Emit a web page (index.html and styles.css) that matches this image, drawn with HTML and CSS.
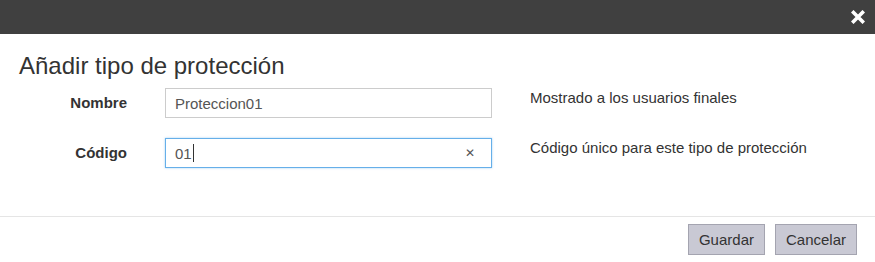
FILE: index.html
```html
<!DOCTYPE html>
<html lang="es">
<head>
  <meta charset="UTF-8">
  <title>Añadir tipo de protección</title>
  <link rel="stylesheet" href="styles.css">
</head>
<body>
  <div class="modal">
    <div class="modal-header">
      <button class="modal-close" type="button" aria-label="Cerrar">
        <svg width="14" height="14" viewBox="0 0 14 14">
          <path d="M2.5 2.5 L11.5 11.5 M11.5 2.5 L2.5 11.5" stroke="#fff" stroke-width="3.6" stroke-linecap="square"/>
        </svg>
      </button>
    </div>

    <div class="modal-body">
      <h1 class="modal-title">Añadir tipo de protección</h1>

      <div class="form-grid">
        <label class="form-label" for="nombre">Nombre</label>
        <div class="form-field">
          <input class="form-input" id="nombre" type="text" value="Proteccion01">
        </div>
        <div class="form-help">Mostrado a los usuarios finales</div>

        <label class="form-label" for="codigo">Código</label>
        <div class="form-field">
          <div class="form-input is-focused">
            <span>01</span><span class="caret"></span>
            <span class="clear-btn">&#x2715;</span>
          </div>
        </div>
        <div class="form-help">Código único para este tipo de protección</div>
      </div>
    </div>

    <div class="modal-footer">
      <button class="btn" type="button">Guardar</button>
      <button class="btn" type="button">Cancelar</button>
    </div>
  </div>
</body>
</html>
```

FILE: styles.css
```css
* {
  margin: 0;
  padding: 0;
  box-sizing: border-box;
}

body {
  font-family: "Liberation Sans", Arial, sans-serif;
  font-size: 15px;
  color: #333;
  background: #fff;
}

.modal {
  width: 875px;
  height: 262px;
  display: flex;
  flex-direction: column;
}

.modal-header {
  height: 34px;
  background: #404040;
  display: flex;
  align-items: center;
  justify-content: flex-end;
  padding-right: 10px;
}

.modal-close {
  background: none;
  border: none;
  width: 14px;
  height: 14px;
  display: flex;
  cursor: pointer;
}

.modal-body {
  padding: 18px 0 0 19px;
  flex: 1;
}

.modal-title {
  font-size: 24px;
  font-weight: normal;
  line-height: 28px;
  color: #333;
  margin-bottom: 8px;
}

.form-grid {
  display: grid;
  grid-template-columns: 108px 327px auto;
  column-gap: 38px;
  row-gap: 20px;
  align-items: center;
}

.form-label {
  text-align: right;
  font-weight: bold;
  color: #333;
  line-height: 20px;
}

.form-input {
  width: 327px;
  height: 30px;
  border: 1px solid #ccc;
  padding: 0 9px;
  font-family: inherit;
  font-size: 15px;
  color: #555;
  background: #fff;
  display: flex;
  align-items: center;
  outline: none;
}

.form-input.is-focused {
  border-color: #66afe9;
  box-shadow: 0 0 2px rgba(102, 175, 233, 0.6);
}

.caret {
  display: inline-block;
  width: 1px;
  height: 18px;
  background: #333;
  margin-left: 1px;
}

.clear-btn {
  margin-left: auto;
  margin-right: 7px;
  font-size: 12px;
  color: #555;
}

.form-help {
  align-self: start;
  line-height: 20px;
  color: #333;
}

.modal-footer {
  border-top: 1px solid #e5e5e5;
  height: 46px;
  display: flex;
  justify-content: flex-end;
  align-items: flex-start;
  gap: 10px;
  padding: 7px 18px 0 0;
}

.btn {
  height: 31px;
  padding: 0 10px;
  background: #c9c9d4;
  border: 1px solid #a4a4b0;
  font-family: inherit;
  font-size: 15px;
  color: #333;
  cursor: pointer;
}
```
